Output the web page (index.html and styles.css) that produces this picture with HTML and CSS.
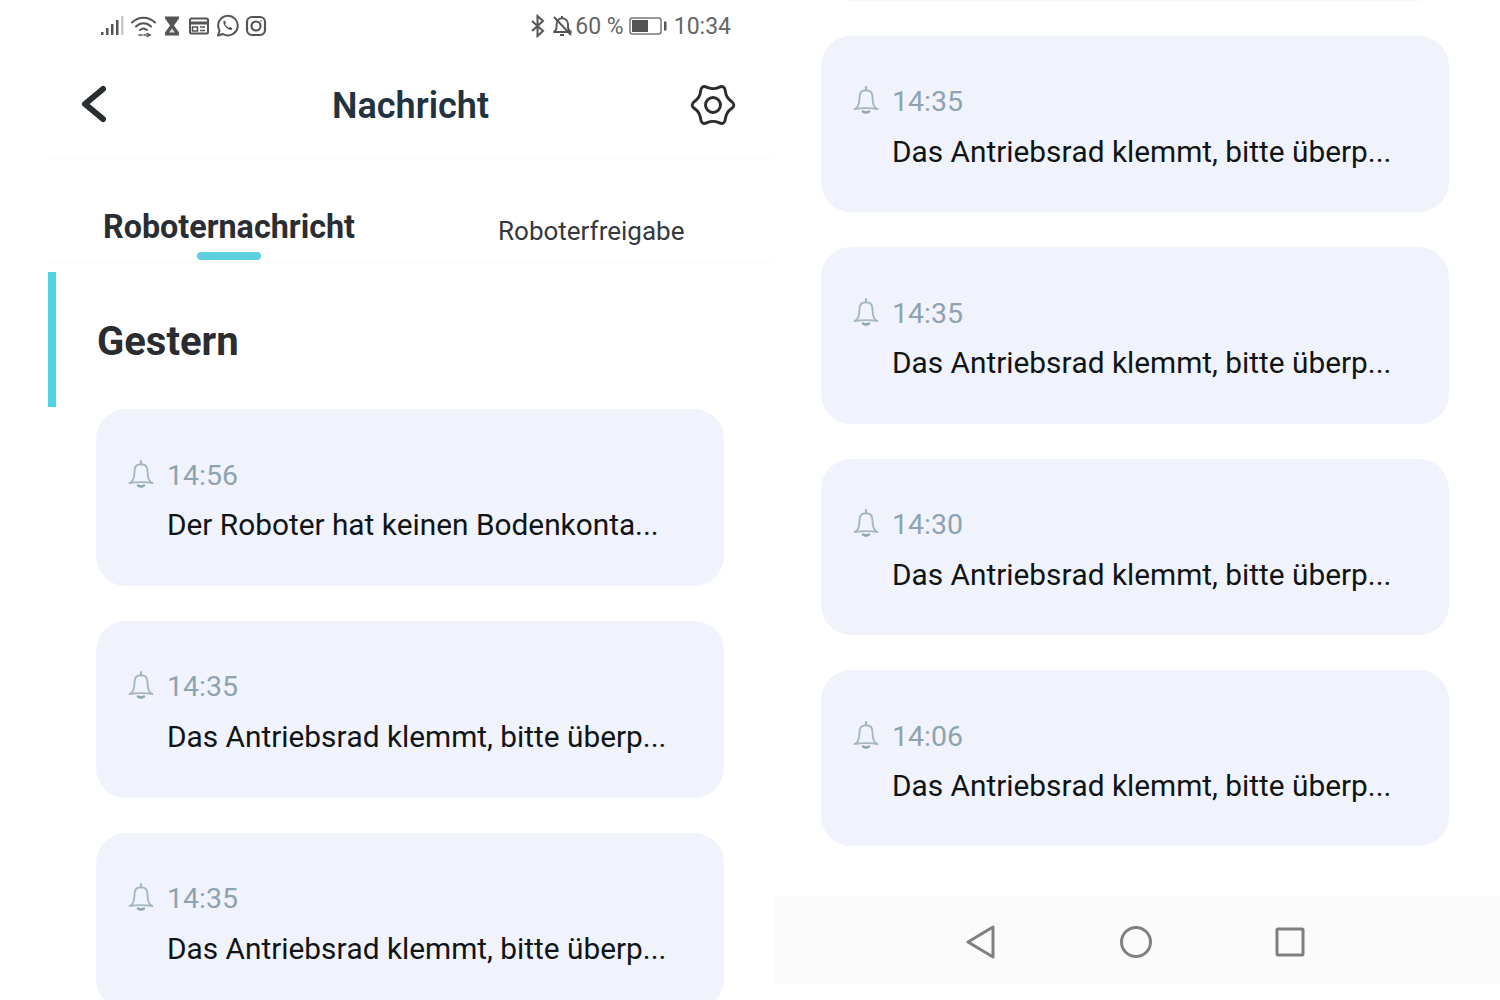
FILE: index.html
```html
<!DOCTYPE html>
<html lang="de">
<head>
<meta charset="utf-8">
<title>Nachricht</title>
<link rel="stylesheet" href="styles.css">
</head>
<body>
<svg class="defs" width="0" height="0" aria-hidden="true">
  <symbol id="bell" viewBox="0 0 26 28">
    <path d="M1.500 23c3.200-1.400 4.400-4 4.700-8l.5-5.500C7 6.200 9.600 4.300 13 4.300s6 1.900 6.300 5.200l.5 5.500c.3 4 1.500 6.600 4.700 8-3.500-.6-7-.9-11.500-.9s-8 .3-11.500.9z" fill="none" stroke="#a5b6c3" stroke-width="1.900" stroke-linejoin="round"/>
    <path d="M13 1.200v3" stroke="#a5b6c3" stroke-width="2.200" stroke-linecap="round"/>
    <path d="M10 25.500c1.800 1.300 4.200 1.300 6 0" fill="none" stroke="#8fa3b1" stroke-width="2.400" stroke-linecap="round"/>
  </symbol>
</svg>
<main class="page">
  <section class="screen left">
    <div class="status">
      <div class="status-icons">
        <svg class="ic" width="24" height="22" viewBox="0 0 24 22"><rect x="1" y="17" width="2.500" height="3" fill="#555"/><rect x="6" y="13" width="2.500" height="7" fill="#555"/><rect x="11" y="9" width="2.500" height="11" fill="#555"/><rect x="16" y="5" width="2.500" height="15" fill="#555"/><rect x="21" y="1" width="2.500" height="19" fill="#c9c9c9"/></svg>
        <svg class="ic" width="28" height="22" viewBox="0 0 28 22" fill="none" stroke="#555" stroke-width="2" stroke-linecap="round"><path d="M2 7.500C8.500 1 18.500 1 25 7.500"/><path d="M6 11.500c4.500-4.200 10.500-4.200 15 0"/><path d="M10 15c2.400-2 4.600-2 7 0"/><path d="M9 20h3M17 18.500l3 1.500-3 1.500M14 20h2" stroke-width="1.600"/></svg>
        <svg class="ic" width="16" height="22" viewBox="0 0 16 22"><path d="M1 1.500h14v2l-5 7 5 7v3H1v-3l5-7-5-7z" fill="#555"/><path d="M5 17.500h6l-3-4z" fill="#ddd"/></svg>
        <svg class="ic ic-card" width="20" height="18" viewBox="0 0 20 18" fill="none" stroke="#555" stroke-width="2"><rect x="1" y="1.500" width="18" height="15" rx="1.500"/><path d="M1 6h18" stroke-width="3"/><path d="M3.500 10h5v4h-5zM11 10h5M11 13.500h5" stroke-width="1.500"/></svg>
        <svg class="ic" width="24" height="24" viewBox="0 0 24 24" fill="none" stroke="#555" stroke-width="2"><path d="M3 21.500l1.500-5A9.800 9.800 0 1 1 8 20z" stroke-linejoin="round"/><path d="M8.500 7.500c-1 2.500 3.500 8.500 7.500 8.500 1 0 1.500-1.500 1.200-2l-2.400-1.200-1 1c-1.600-.6-3-2-3.700-3.700l1-1L10 7c-.5-.4-1.200 0-1.500.5z" fill="#555" stroke="none"/></svg>
        <svg class="ic" width="22" height="22" viewBox="0 0 22 22" fill="none" stroke="#555" stroke-width="2.200"><rect x="2" y="2" width="18" height="18" rx="5"/><circle cx="11" cy="11" r="4.500"/><circle cx="16" cy="6" r=".8" fill="#555" stroke="none"/></svg>
      </div>
      <div class="status-right">
        <svg class="ic ic-bt" width="16" height="24" viewBox="0 0 16 24" fill="none" stroke="#555" stroke-width="2"><path d="M2 7l11 10-5.500 5V2L13 7 2 17"/></svg>
        <svg class="ic" width="21" height="22" viewBox="0 0 21 22" fill="none" stroke="#555" stroke-width="1.900"><path d="M2 17c2-1.200 2.600-3 2.600-5.500V9c0-3.300 2.400-5.800 5.400-5.800S16 5.700 16 9v3c0 2.200.8 3.800 3 5z" stroke-linejoin="round"/><path d="M10 1v2M8 20h4M2 2l17 18"/></svg>
        <span class="pct">60 %</span>
        <svg class="ic ic-batt" width="38" height="18" viewBox="0 0 38 18"><rect x="1" y="1" width="31" height="16" rx="2.500" fill="#fff" stroke="#777" stroke-width="1.500"/><rect x="3" y="3" width="16" height="12" fill="#555"/><rect x="35" y="4.500" width="2.500" height="9" fill="#555"/></svg>
        <span class="clock">10:34</span>
      </div>
    </div>
    <header class="topbar">
      <svg class="back" width="28" height="40" viewBox="0 0 28 40" fill="none" stroke="#2a2d30" stroke-width="6" stroke-linecap="round" stroke-linejoin="round"><path d="M24 4L6 19l18 15"/></svg>
      <h1 class="title">Nachricht</h1>
      <svg class="gear" width="48" height="48" viewBox="0 0 48 48" fill="none" stroke="#2a2d30" stroke-width="2.900" stroke-linejoin="round"><path d="M42.250 20.250Q47.500 24 42.250 27.750Q36.990 31.500 36.370 37.930Q35.750 44.350 29.880 41.680Q24 39 18.120 41.680Q12.250 44.350 11.630 37.930Q11.010 31.500 5.750 27.750Q.5 24 5.750 20.250Q11.010 16.500 11.630 10.070Q12.250 3.650 18.120 6.320Q24 9 29.880 6.320Q35.750 3.650 36.370 10.070Q36.990 16.500 42.250 20.250Z"/><circle cx="24" cy="24" r="7.500"/></svg>
    </header>
    <nav class="tabs">
      <div class="tab tab-active">Roboternachricht<span class="tab-line"></span></div>
      <div class="tab tab-other">Roboterfreigabe</div>
    </nav>
    <div class="section-head"><h2 class="section-title">Gestern</h2></div>
    <div class="cards">
      <article class="card">
        <div class="card-time"><svg class="bell"><use href="#bell"/></svg><span>14:56</span></div>
        <p class="card-text">Der Roboter hat keinen Bodenkonta<span class="dots">...</span></p>
      </article>
      <article class="card">
        <div class="card-time"><svg class="bell"><use href="#bell"/></svg><span>14:35</span></div>
        <p class="card-text">Das Antriebsrad klemmt, bitte überp<span class="dots">...</span></p>
      </article>
      <article class="card">
        <div class="card-time"><svg class="bell"><use href="#bell"/></svg><span>14:35</span></div>
        <p class="card-text">Das Antriebsrad klemmt, bitte überp<span class="dots">...</span></p>
      </article>
    </div>
  </section>
  <section class="screen right">
    <div class="sliver"></div>
    <div class="cards">
      <article class="card">
        <div class="card-time"><svg class="bell"><use href="#bell"/></svg><span>14:35</span></div>
        <p class="card-text">Das Antriebsrad klemmt, bitte überp<span class="dots">...</span></p>
      </article>
      <article class="card">
        <div class="card-time"><svg class="bell"><use href="#bell"/></svg><span>14:35</span></div>
        <p class="card-text">Das Antriebsrad klemmt, bitte überp<span class="dots">...</span></p>
      </article>
      <article class="card">
        <div class="card-time"><svg class="bell"><use href="#bell"/></svg><span>14:30</span></div>
        <p class="card-text">Das Antriebsrad klemmt, bitte überp<span class="dots">...</span></p>
      </article>
      <article class="card">
        <div class="card-time"><svg class="bell"><use href="#bell"/></svg><span>14:06</span></div>
        <p class="card-text">Das Antriebsrad klemmt, bitte überp<span class="dots">...</span></p>
      </article>
    </div>
    <div class="navbar">
      <svg width="30" height="34" viewBox="0 0 30 34" fill="none" stroke="#808080" stroke-width="3" stroke-linejoin="round"><path d="M27 2v30L2 17z"/></svg>
      <svg width="34" height="34" viewBox="0 0 34 34" fill="none" stroke="#808080" stroke-width="3"><circle cx="17" cy="17" r="14.500"/></svg>
      <svg width="30" height="30" viewBox="0 0 30 30" fill="none" stroke="#808080" stroke-width="3" stroke-linejoin="round"><rect x="2" y="2" width="26" height="26" rx="1"/></svg>
    </div>
  </section>
</main>
</body>
</html>
```

FILE: styles.css
```css
* { box-sizing: border-box; }
html, body { margin: 0; padding: 0; background: #fff; }
body { font-family: Roboto, "Liberation Sans", sans-serif; color: #16181a; }
.defs { position: absolute; }
.page { display: flex; width: 1500px; height: 1000px; overflow: hidden; background: #fff; }
.screen { display: flex; flex-direction: column; }
.screen > * { flex: none; }
.left { width: 772px; padding-left: 48px; }
.right { width: 728px; padding-left: 3px; }

.status { display: flex; align-items: center; justify-content: space-between; height: 52px; padding: 0 41px 0 52px; color: #666; font-size: 23px; }
.status-icons, .status-right { display: flex; align-items: center; }
.status-icons { gap: 6px; }
.status-right { gap: 5px; }
.ic { display: block; flex: none; }
.ic-card { margin-left: 3px; }
.ic-bt { margin-right: 1px; }
.ic-batt { margin: 0 2px 0 0; }
.pct { margin-left: -3px; }

.topbar { display: grid; grid-template-columns: 1fr auto 1fr; align-items: center; height: 107px; padding: 0 30px 3px 31px; border-bottom: 1px solid #f8f8f8; }
.title { margin: 4px 0 0; font-size: 36px; font-weight: 600; color: #22323f; line-height: 1; }
.back { margin-top: 2px; }
.gear { justify-self: end; margin: 3px 5.500px 0 0; }

.tabs { display: flex; align-items: flex-end; height: 104px; padding-left: 55px; border-bottom: 1px solid #f8f8f8; }
.tab { position: relative; line-height: 1; }
.tab-active { font-size: 32.300px; font-weight: 700; color: #2a2e33; padding-bottom: 19px; }
.tab-other { margin-left: 143px; font-size: 26px; color: #33393e; padding-bottom: 18px; }
.tab-line { position: absolute; left: 94px; bottom: 2px; width: 64px; height: 8px; border-radius: 4px; background: #5ccfe0; }

.section-head { display: flex; align-items: center; height: 135px; margin-top: 9px; margin-bottom: 2.400px; padding: 5px 0 0 41px; border-left: 8px solid #4dd3e3; }
.section-title { margin: 0; font-size: 40px; font-weight: 700; color: #2a2c2f; line-height: 1; }

.cards { display: flex; flex-direction: column; gap: 35px; }
.left .cards { padding-left: 48px; }
.right .cards { padding-left: 46px; }
.card { flex: none; width: 628px; height: 176.400px; padding: 46px 0 0 32px; border-radius: 30px; background: #f0f3fb; }
.left .card { height: 176.600px; }
.card-time { display: flex; align-items: center; gap: 13px; height: 40px; font-size: 28.500px; color: #8ea3b1; }
.bell { width: 26px; height: 28px; margin-bottom: 3px; flex: none; }
.card-text { margin: 10px 0 0 39px; font-size: 29.800px; font-kerning: none; line-height: 40px; color: #111416; white-space: nowrap; }

.sliver { height: 1px; margin: 0 79px 34.900px 73px; background: #f8f8fb; }
.navbar { display: flex; align-items: center; justify-content: space-between; height: 88px; margin-top: 49.100px; padding: 4px 195px 0 191px; background: #fbfbfb; }
```
